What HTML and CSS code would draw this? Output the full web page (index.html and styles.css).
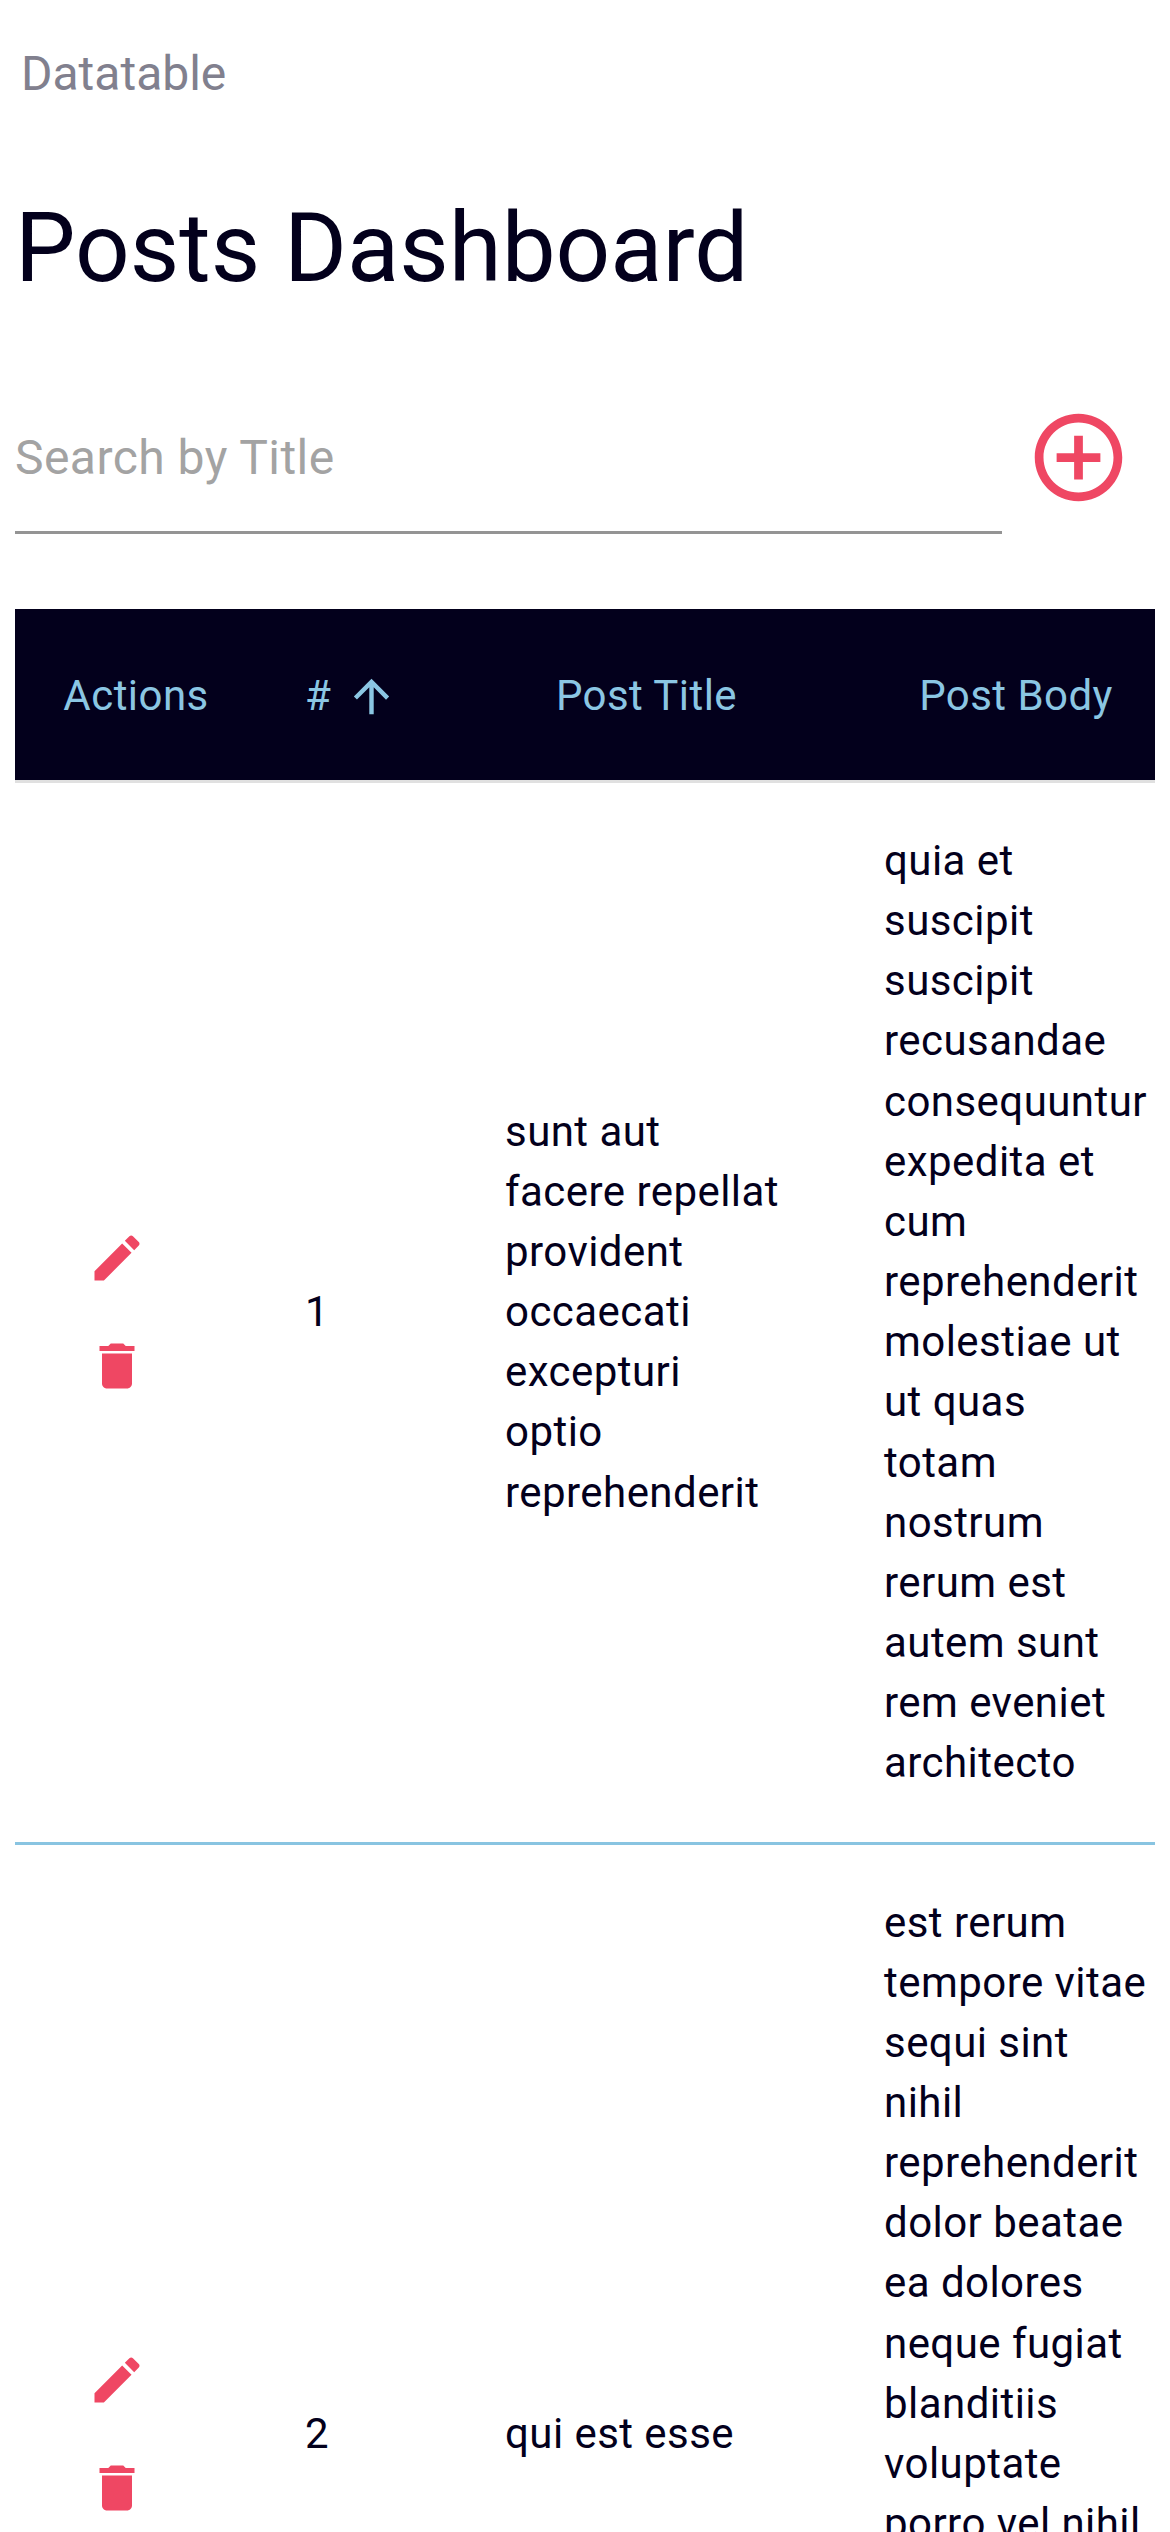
FILE: index.html
```html
<!DOCTYPE html>
<html lang="en">
<head>
<meta charset="utf-8">
<title>Posts Dashboard</title>
<link rel="stylesheet" href="styles.css">
</head>
<body>
<main class="page">
  <p class="crumb">Datatable</p>
  <h1 class="title">Posts Dashboard</h1>
  <div class="toolbar">
    <label class="search"><input class="search-input" type="text" placeholder="Search by Title"></label>
    <button class="add-btn" type="button" aria-label="Add post">
      <svg class="add-icon" viewBox="0 0 24 24"><path d="M13 7h-2v4H7v2h4v4h2v-4h4v-2h-4V7zm-1-5C6.48 2 2 6.48 2 12s4.48 10 10 10 10-4.48 10-10S17.52 2 12 2zm0 18c-4.41 0-8-3.59-8-8s3.59-8 8-8 8 3.59 8 8-3.59 8-8 8z"/></svg>
    </button>
  </div>
  <div class="table-wrap">
    <table class="table">
      <colgroup><col class="col-actions"><col class="col-id"><col class="col-title"><col class="col-body"></colgroup>
      <thead>
        <tr>
          <th>Actions</th>
          <th class="th-id"><span class="sort">#<svg class="sort-icon" viewBox="0 0 24 24"><path d="M4 12l1.41 1.41L11 7.83V20h2V7.83l5.58 5.59L20 12l-8-8-8 8z"/></svg></span></th>
          <th>Post Title</th>
          <th>Post Body</th>
        </tr>
      </thead>
      <tbody>
        <tr>
          <td class="td-actions">
            <button class="icon-btn" type="button" aria-label="Edit"><svg class="row-icon" viewBox="0 0 24 24"><path d="M3 17.25V21h3.75L17.81 9.94l-3.75-3.75L3 17.25zM20.71 7.04c.39-.39.39-1.02 0-1.41l-2.34-2.34c-.39-.39-1.02-.39-1.41 0l-1.83 1.83 3.75 3.75 1.83-1.83z"/></svg></button>
            <button class="icon-btn" type="button" aria-label="Delete"><svg class="row-icon" viewBox="0 0 24 24"><path d="M6 19c0 1.1.9 2 2 2h8c1.1 0 2-.9 2-2V7H6v12zM19 4h-3.5l-1-1h-5l-1 1H5v2h14V4z"/></svg></button>
          </td>
          <td>1</td>
          <td class="td-title">sunt aut facere repellat provident occaecati excepturi optio reprehenderit</td>
          <td>quia et suscipit suscipit recusandae consequuntur expedita et cum reprehenderit molestiae ut ut quas totam nostrum rerum est autem sunt rem eveniet architecto</td>
        </tr>
        <tr>
          <td class="td-actions">
            <button class="icon-btn" type="button" aria-label="Edit"><svg class="row-icon" viewBox="0 0 24 24"><path d="M3 17.25V21h3.75L17.81 9.94l-3.75-3.75L3 17.25zM20.71 7.04c.39-.39.39-1.02 0-1.41l-2.34-2.34c-.39-.39-1.02-.39-1.41 0l-1.83 1.83 3.75 3.75 1.83-1.83z"/></svg></button>
            <button class="icon-btn" type="button" aria-label="Delete"><svg class="row-icon" viewBox="0 0 24 24"><path d="M6 19c0 1.1.9 2 2 2h8c1.1 0 2-.9 2-2V7H6v12zM19 4h-3.5l-1-1h-5l-1 1H5v2h14V4z"/></svg></button>
          </td>
          <td>2</td>
          <td class="td-title">qui est esse</td>
          <td>est rerum tempore vitae sequi sint nihil reprehenderit dolor beatae ea dolores neque fugiat blanditiis voluptate porro vel nihil molestiae ut reiciendis qui aperiam non debitis possimus qui neque nisi nulla</td>
        </tr>
      </tbody>
    </table>
  </div>
</main>
</body>
</html>
```
FILE: styles.css
```css
* { box-sizing: border-box; }
html, body { margin: 0; background: #fff; }
body {
  font-family: Roboto, "Liberation Sans", sans-serif;
  color: #03001c;
}
.page { padding: 0 15px; }
.crumb {
  margin: 0;
  padding: 50px 0 0 6px;
  font-size: 48px;
  line-height: 48px;
  color: #81808e;
}
.title {
  margin: 0;
  padding-top: 94px;
  font-size: 96px;
  line-height: 112px;
  font-weight: 400;
  color: #03001c;
}
.toolbar {
  display: flex;
  align-items: center;
  margin-top: 105px;
}
.search {
  display: block;
  width: 987px;
  border-bottom: 3px solid #949494;
}
.search-input {
  display: block;
  width: 100%;
  height: 122px;
  padding: 0 0 26px;
  border: 0;
  outline: 0;
  background: none;
  font: 400 48px Roboto, sans-serif;
  letter-spacing: 0.00938em;
  color: #03001c;
}
.search-input::placeholder { color: #a3a3a3; opacity: 1; }
.add-btn {
  display: flex;
  margin: -28px 0 0 24px;
  padding: 0;
  border: 0;
  background: none;
}
.add-icon { width: 105px; height: 105px; fill: #ef4763; }
.table-wrap {
  margin-top: 75px;
  width: 1140px;
  overflow: hidden;
}
.table {
  table-layout: fixed;
  width: 1181px;
  border-collapse: separate;
  border-spacing: 0;
  font-size: 42px;
  line-height: 60.15px;
  letter-spacing: 0.01071em;
}
.col-actions { width: 242px; }
.col-id { width: 200px; }
.col-title { width: 379px; }
.col-body { width: 360px; }
th {
  height: 174px;
  padding: 4px 48px 0;
  background: #03001c;
  background-clip: padding-box;
  color: #8bc6e3;
  font-weight: 400;
  text-align: center;
  border-bottom: 3px solid #e0e0e0;
  white-space: nowrap;
}
.th-id { text-align: left; }
.sort { display: inline-flex; align-items: center; gap: 14px; }
.sort-icon { width: 53px; height: 53px; fill: #8bc6e3; }
td {
  padding: 48px;
  vertical-align: middle;
  border-bottom: 3px solid #89c4e1;
}
.td-title { padding-right: 56px; }
.td-actions { padding: 0 0 0 72px; }
.icon-btn {
  display: block;
  padding: 0;
  border: 0;
  background: none;
}
.icon-btn + .icon-btn { padding-top: 48px; }
.row-icon { display: block; width: 60px; height: 60px; fill: #ef4763; }
```
